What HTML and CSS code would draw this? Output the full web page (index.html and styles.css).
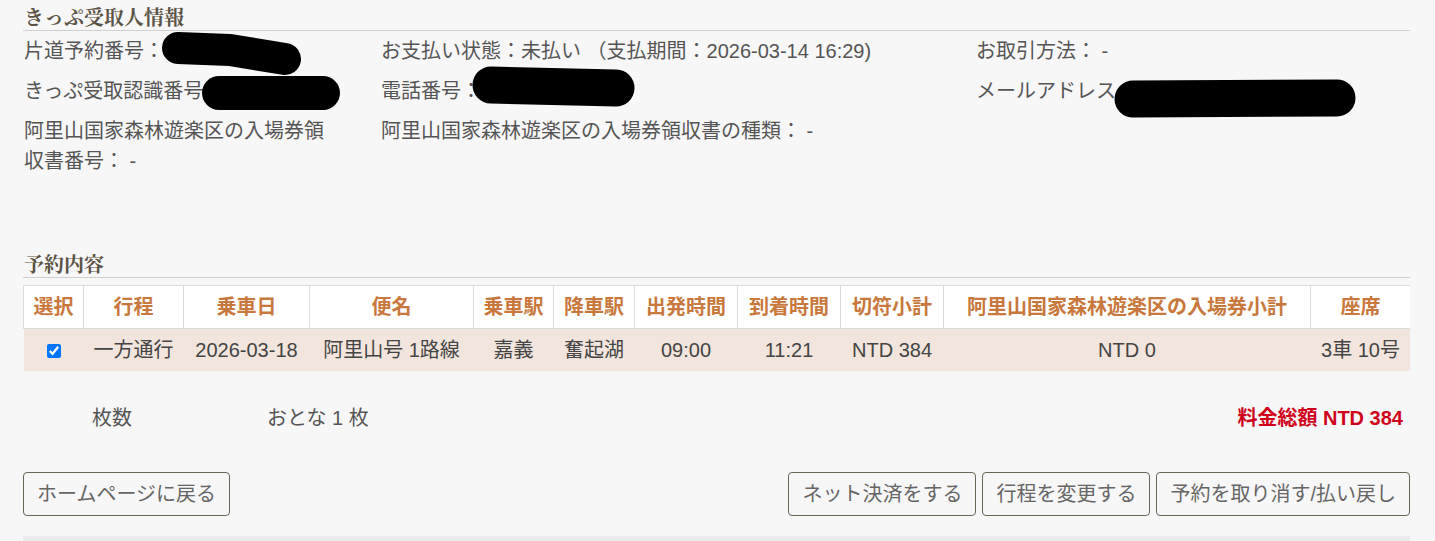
FILE: index.html
```html
<!DOCTYPE html>
<html lang="ja">
<head>
<meta charset="utf-8">
<title>予約内容</title>
<link rel="stylesheet" href="styles.css">
</head>
<body>
<div class="page">
  <h2 class="section-title">きっぷ受取人情報</h2>
  <div class="info-grid">
    <div class="info-item">片道予約番号：</div>
    <div class="info-item">お支払い状態：未払い （支払期間：2026-03-14 16:29)</div>
    <div class="info-item">お取引方法： -</div>
    <div class="info-item">きっぷ受取認識番号</div>
    <div class="info-item">電話番号：</div>
    <div class="info-item">メールアドレス</div>
    <div class="info-item">阿里山国家森林遊楽区の入場券領収書番号： -</div>
    <div class="info-item">阿里山国家森林遊楽区の入場券領収書の種類： -</div>
    <div class="info-item"></div>
  </div>

  <h2 class="section-title section-title--order">予約内容</h2>
  <table class="order-table">
    <colgroup>
      <col style="width:60px"><col style="width:100px"><col style="width:126px"><col style="width:164px">
      <col style="width:80px"><col style="width:81px"><col style="width:103px"><col style="width:103px">
      <col style="width:103px"><col style="width:367px"><col style="width:100px">
    </colgroup>
    <thead>
      <tr>
        <th>選択</th><th>行程</th><th>乗車日</th><th>便名</th><th>乗車駅</th><th>降車駅</th>
        <th>出発時間</th><th>到着時間</th><th>切符小計</th><th>阿里山国家森林遊楽区の入場券小計</th><th>座席</th>
      </tr>
    </thead>
    <tbody>
      <tr>
        <td><input type="checkbox" class="check" checked></td>
        <td>一方通行</td><td>2026-03-18</td><td>阿里山号 1路線</td><td>嘉義</td><td>奮起湖</td>
        <td>09:00</td><td>11:21</td><td>NTD 384</td><td>NTD 0</td><td>3車 10号</td>
      </tr>
    </tbody>
  </table>

  <div class="summary">
    <span class="summary-label">枚数</span>
    <span class="summary-value">おとな 1 枚</span>
    <span class="summary-total">料金総額 NTD 384</span>
  </div>

  <div class="actions">
    <button class="btn">ホームページに戻る</button>
    <div class="actions-right">
      <button class="btn">ネット決済をする</button>
      <button class="btn">行程を変更する</button>
      <button class="btn">予約を取り消す/払い戻し</button>
    </div>
  </div>

  <div class="bottom-band"></div>

  <svg class="redactions" width="1435" height="130" viewBox="0 0 1435 130" aria-hidden="true">
    <g stroke="#000" stroke-linecap="round" fill="none">
      <path d="M178 48 L230 50 L285 59" stroke-width="32" stroke-linejoin="round"/>
      <path d="M219 93 L323 93" stroke-width="34"/>
      <path d="M491 85 L616 88" stroke-width="37"/>
      <path d="M1133 99 L1337 98" stroke-width="37"/>
    </g>
  </svg>
</div>
</body>
</html>
```

FILE: styles.css
```css
html, body {
  margin: 0;
  padding: 0;
  background: #f7f7f7;
}

body {
  font-family: "Liberation Sans", "Noto Sans CJK JP", sans-serif;
  color: #555;
  font-size: 20px;
}

.page {
  position: relative;
  width: 1387px;
  padding: 4px 0 0 23px;
  height: 537px;
  overflow: hidden;
}

.section-title {
  margin: 0;
  font-family: "Noto Serif CJK JP", "Noto Sans CJK JP", serif;
  font-weight: bold;
  font-size: 20px;
  line-height: 26px;
  color: #5b5345;
  border-bottom: 1px solid #cfcfcf;
  padding-left: 1px;
}

.section-title--order {
  margin-top: 75px;
}

.info-grid {
  display: grid;
  grid-template-columns: 310px 548px 1fr;
  column-gap: 47px;
  row-gap: 10px;
  margin-top: 5px;
  line-height: 30px;
  padding-left: 1px;
}

.info-item {
  min-height: 30px;
}

.order-table {
  margin-top: 7px;
  width: 1387px;
  border-collapse: collapse;
  table-layout: fixed;
  text-align: center;
  line-height: 30px;
}

.order-table th {
  background: #fff;
  color: #c8783c;
  font-weight: bold;
  padding: 6px 0;
  border: 1px solid #dcdcdc;
  white-space: nowrap;
}

.order-table td {
  background: #f1e5dd;
  color: #444;
  padding: 6px 0;
  white-space: nowrap;
}

.check {
  margin: 0;
  width: 14px;
  height: 14px;
  vertical-align: -1px;
}

.summary {
  display: flex;
  align-items: center;
  margin-top: 32px;
  line-height: 30px;
  padding-left: 69px;
  padding-right: 7px;
}

.summary-label {
  width: 175px;
}

.summary-total {
  margin-left: auto;
  color: #d0021b;
  font-weight: bold;
  font-size: 20px;
}

.actions {
  display: flex;
  justify-content: space-between;
  margin-top: 39px;
}

.actions-right {
  display: flex;
  gap: 6px;
}

.btn {
  font-family: "Liberation Sans", "Noto Sans CJK JP", sans-serif;
  font-size: 20px;
  line-height: 30px;
  color: #666;
  background: transparent;
  border: 1px solid #6b6459;
  border-radius: 4px;
  padding: 6px 13px;
  margin: 0;
}

.bottom-band {
  margin-top: 20px;
  height: 10px;
  background: #ececec;
}

.redactions {
  position: absolute;
  left: 0;
  top: 0;
  pointer-events: none;
}
```
